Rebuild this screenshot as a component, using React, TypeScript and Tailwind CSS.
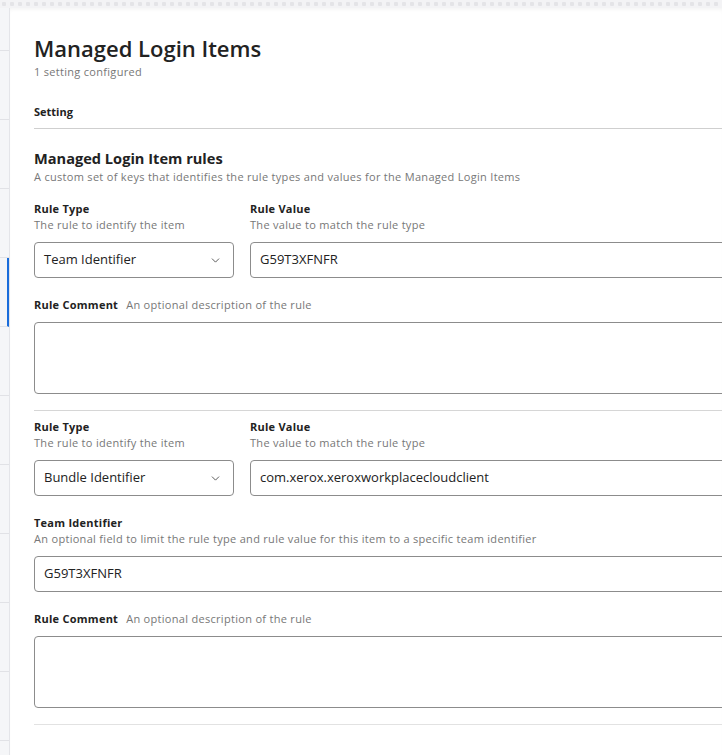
import { ChevronDown } from 'lucide-react'

const font = { fontFamily: '"Open Sans", "Noto Sans", sans-serif' }

function FieldLabel({ title, hint }: { title: string; hint: string }) {
    return (
        <div>
            <p className="text-[11px] font-bold leading-4 tracking-[0.25px] text-[#222]">{title}</p>
            <p className="text-[11px] leading-4 tracking-[0.3px] text-[#777]">{hint}</p>
        </div>
    )
}

function SelectBox({ value }: { value: string }) {
    return (
        <div className="mt-[9px] flex h-9 w-[200px] items-center justify-between rounded-[4px] border border-[#8c8c8c] pl-[9px] pr-[11px] text-[13px] text-[#222]">
            <span>{value}</span>
            <ChevronDown size={13} strokeWidth={1.6} className="text-[#444]" />
        </div>
    )
}

function TextBox({ value, className = '' }: { value: string; className?: string }) {
    return (
        <div className={`mt-[9px] flex h-9 items-center rounded-[4px] border border-[#8c8c8c] pl-[9px] text-[13px] text-[#222] ${className}`}>
            {value}
        </div>
    )
}

function CommentField() {
    return (
        <div className="mt-[19px]">
            <p className="text-[11px] leading-4">
                <span className="font-bold tracking-[0.25px] text-[#222]">Rule Comment</span>
                <span className="ml-2 tracking-[0.3px] text-[#777]">An optional description of the rule</span>
            </p>
            <div className="mt-[9px] h-[72px] w-[760px] rounded-[4px] border border-[#8c8c8c]" />
        </div>
    )
}

function RuleRow({ type, value }: { type: string; value: string }) {
    return (
        <div className="flex gap-4">
            <div className="w-[200px]">
                <FieldLabel title="Rule Type" hint="The rule to identify the item" />
                <SelectBox value={type} />
            </div>
            <div className="w-[544px]">
                <FieldLabel title="Rule Value" hint="The value to match the rule type" />
                <TextBox value={value} className="w-[544px]" />
            </div>
        </div>
    )
}

export default function App() {
    const navRows = Array.from({ length: 11 })

    return (
        <div className="flex h-[755px] w-[722px] flex-col overflow-hidden bg-white" style={font}>
            {/* dotted top band */}
            <div className="h-2 shrink-0 bg-[#f3f3f5] bg-[radial-gradient(circle,#e4e4e7_2px,transparent_2.5px)] bg-[length:8px_8px]" />

            <div className="flex min-h-0 flex-1">
                {/* side strip */}
                <div className="w-[10px] shrink-0 border-r border-[#e4e5e9] bg-[#f5f6f8]">
                    <div className="h-[43px] border-b border-[#e1e2e6]" />
                    {navRows.map((_, i) => (
                        <div key={i}
                            className={`h-[69px] border-b border-[#e1e2e6] ${i === 3 ? 'border-r-2 border-r-[#1a6ddb]' : ''}`} />
                    ))}
                </div>

                {/* main panel */}
                <div className="min-w-0 flex-1 pl-6 pt-[26px] shadow-[inset_0_3px_4px_-2px_rgba(0,0,0,0.06)]">
                    <h1 className="text-[22px] font-semibold leading-7 text-[#222]">Managed Login Items</h1>
                    <p className="mt-[2px] text-[11px] leading-4 tracking-[0.3px] text-[#777]">1 setting configured</p>

                    <div className="mt-6 w-[760px] border-b border-[#cfcfcf] pb-2">
                        <p className="text-[11px] font-bold leading-4 text-[#222]">Setting</p>
                    </div>

                    <h2 className="mt-[19px] text-[14.6px] font-bold leading-5 text-[#222]">Managed Login Item rules</h2>
                    <p className="mt-[1px] text-[11px] leading-4 tracking-[0.3px] text-[#777]">
                        A custom set of keys that identifies the rule types and values for the Managed Login Items
                    </p>

                    {/* rule 1 */}
                    <div className="mt-4 w-[760px] border-b border-[#d6d6d6] pb-4">
                        <RuleRow type="Team Identifier" value="G59T3XFNFR" />
                        <CommentField />
                    </div>

                    {/* rule 2 */}
                    <div className="mt-2 w-[760px] border-b border-[#e2e2e2] pb-4">
                        <RuleRow type="Bundle Identifier" value="com.xerox.xeroxworkplacecloudclient" />
                        <div className="mt-[19px]">
                            <FieldLabel title="Team Identifier"
                                hint="An optional field to limit the rule type and rule value for this item to a specific team identifier" />
                            <TextBox value="G59T3XFNFR" className="w-[760px]" />
                        </div>
                        <CommentField />
                    </div>
                </div>
            </div>
        </div>
    )
}
